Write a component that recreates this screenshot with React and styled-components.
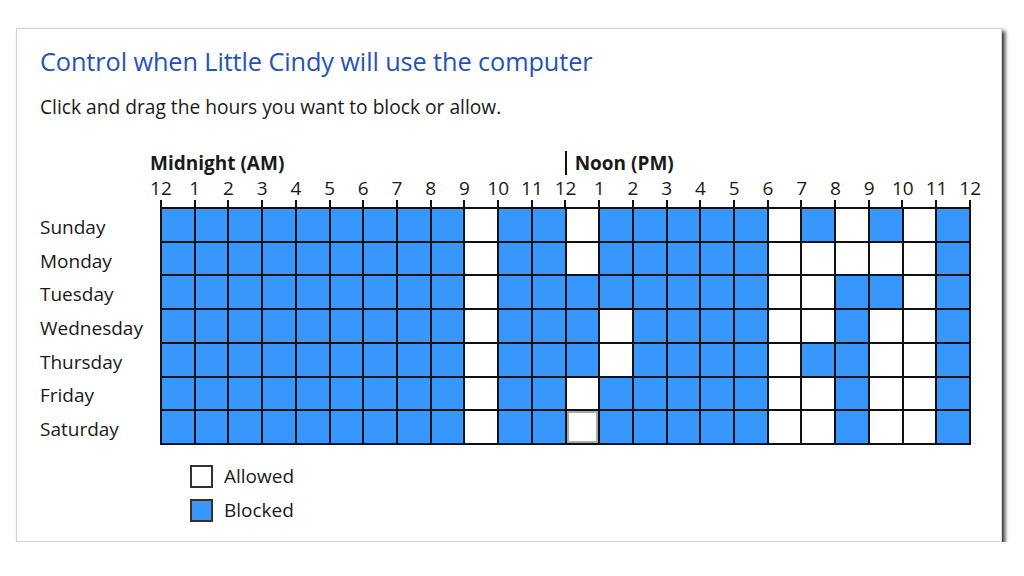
import React from 'react';
import styled, { createGlobalStyle } from 'styled-components';

const GlobalStyle = createGlobalStyle`
  html, body {
    margin: 0;
    background: #ffffff;
  }
  body {
    font-family: "Open Sans", "Noto Sans", sans-serif;
    color: #1a1a1a;
  }
`;

const STEP = 33.72;
const TEXT = '19px';

const days = [
  ['Sunday', 'BBBBBBBBBWBBWBBBBBWBWBWB'],
  ['Monday', 'BBBBBBBBBWBBWBBBBBWWWWWB'],
  ['Tuesday', 'BBBBBBBBBWBBBBBBBBWWBBWB'],
  ['Wednesday', 'BBBBBBBBBWBBBWBBBBWWBWWB'],
  ['Thursday', 'BBBBBBBBBWBBBWBBBBWBBWWB'],
  ['Friday', 'BBBBBBBBBWBBWBBBBBWWBWWB'],
  ['Saturday', 'BBBBBBBBBWBBFBBBBBWWBWWB'],
];

const hours = ['12', '1', '2', '3', '4', '5', '6', '7', '8', '9', '10', '11'];
const hourLabels = [...hours, ...hours, '12'];

const Page = styled.div`
  padding: 28px 0 0 16px;
`;

const Panel = styled.div`
  width: 986px;
  height: 514px;
  box-sizing: border-box;
  border: 1px solid #d2d2d2;
  background: #fff;
  box-shadow: 3px 3px 4px rgba(0, 0, 0, 0.8);
  padding: 17px 0 0 23px;
`;

const Title = styled.h1`
  margin: 0;
  font-size: 25.3px;
  font-weight: 400;
  color: #2453b8;
  line-height: 30px;
  letter-spacing: -0.1px;
`;

const Hint = styled.p`
  margin: 18px 0 0;
  font-size: 19.2px;
  line-height: 26px;
`;

const Schedule = styled.div`
  margin-top: 30px;
`;

const HeaderRow = styled.div`
  display: flex;
  align-items: center;
  height: 26px;
  margin-left: 110px;
  font-size: ${TEXT};
  font-weight: 700;
`;

const Midnight = styled.span`
  width: ${STEP * 12 + 10}px;
`;

const Noon = styled.span`
  border-left: 2px solid #111;
  padding-left: 8px;
  line-height: 24px;
`;

const HourRow = styled.div`
  display: flex;
  margin-left: ${120 - STEP / 2 + 1}px;
  height: 24px;
  align-items: center;
  font-size: ${TEXT};
`;

const Hour = styled.span`
  width: ${STEP}px;
  flex: none;
  text-align: center;
`;

const Ticks = styled.div`
  display: flex;
  width: 811px;
  margin-left: 120px;
  height: 7px;
`;

const Tick = styled.div`
  flex: 1;
  border-left: 2px solid #111;
  &:last-child {
    border-right: 2px solid #111;
  }
`;

const Body = styled.div`
  display: flex;
`;

const DayNames = styled.div`
  width: 120px;
  display: flex;
  flex-direction: column;
  padding-top: 3px;
`;

const DayName = styled.div`
  height: ${STEP}px;
  display: flex;
  align-items: center;
  font-size: ${TEXT};
`;

const Grid = styled.div`
  display: grid;
  grid-template-columns: repeat(24, 1fr);
  grid-template-rows: repeat(7, 1fr);
  gap: 2px;
  width: 811px;
  height: 238px;
  box-sizing: border-box;
  border: 2px solid #111;
  background: #111;
`;

const Cell = styled.div`
  background: ${p => (p.$blocked ? '#3797fc' : '#ffffff')};
  box-shadow: ${p => (p.$focused ? 'inset 0 0 0 2px #a9a9a9' : 'none')};
`;

const Legend = styled.div`
  display: flex;
  flex-direction: column;
  gap: 11px;
  margin: 19px 0 0 150px;
`;

const LegendItem = styled.div`
  display: flex;
  align-items: center;
  gap: 11px;
  height: 23px;
  line-height: 23px;
  font-size: ${TEXT};
`;

const Swatch = styled.span`
  width: 19px;
  height: 19px;
  border: 2px solid #333;
  background: ${p => p.$color};
`;

export default function App() {
  return (
    <Page>
      <GlobalStyle />
      <Panel>
        <Title>Control when Little Cindy will use the computer</Title>
        <Hint>Click and drag the hours you want to block or allow.</Hint>

        <Schedule>
          <HeaderRow>
            <Midnight>Midnight (AM)</Midnight>
            <Noon>Noon (PM)</Noon>
          </HeaderRow>
          <HourRow>
            {hourLabels.map((h, i) => (
              <Hour key={i}>{h}</Hour>
            ))}
          </HourRow>
          <Ticks>
            {Array.from({ length: 24 }, (_, i) => (
              <Tick key={i} />
            ))}
          </Ticks>
          <Body>
            <DayNames>
              {days.map(([name]) => (
                <DayName key={name}>{name}</DayName>
              ))}
            </DayNames>
            <Grid>
              {days.map(([name, row]) =>
                row.split('').map((c, i) => (
                  <Cell key={name + i} $blocked={c === 'B'} $focused={c === 'F'} />
                ))
              )}
            </Grid>
          </Body>
        </Schedule>

        <Legend>
          <LegendItem>
            <Swatch $color="#ffffff" />
            Allowed
          </LegendItem>
          <LegendItem>
            <Swatch $color="#3797fc" />
            Blocked
          </LegendItem>
        </Legend>
      </Panel>
    </Page>
  );
}
